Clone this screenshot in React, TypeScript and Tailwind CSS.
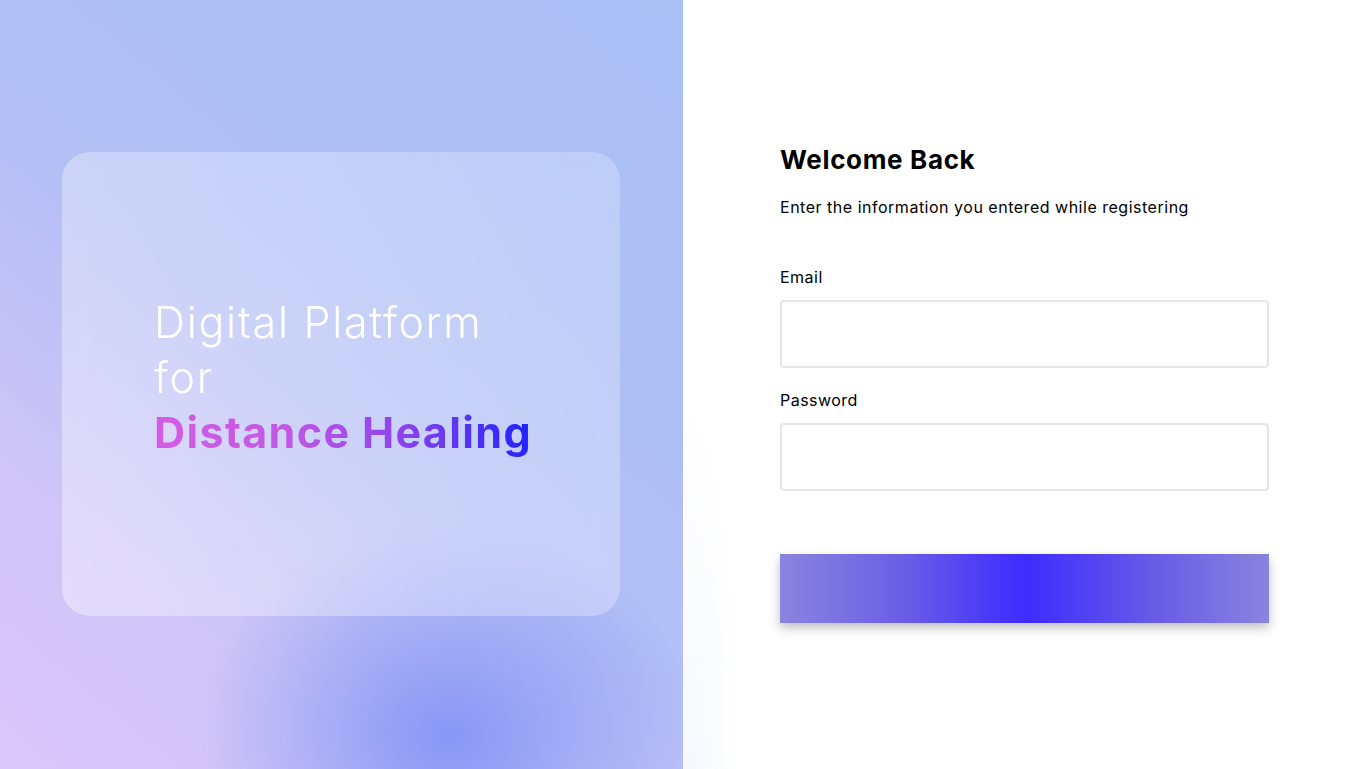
import React from "react";

const LeftPanel = () => (
  <div className="relative flex h-full w-[683px] shrink-0 items-start overflow-hidden bg-[radial-gradient(ellipse_250px_210px_at_450px_735px,#8797f5_0%,rgba(140,155,245,0.6)_45%,rgba(160,170,245,0)_100%),linear-gradient(40deg,#dbc7fa_0%,#cdc4f7_25%,#b4bff5_48%,#adbff5_70%,#aac0f5_100%)]">
    <div className="ml-[62px] mt-[152px] h-[464px] w-[558px] rounded-[28px] bg-[linear-gradient(60deg,rgba(255,255,255,0.38)_0%,rgba(255,255,255,0.3)_50%,rgba(255,255,255,0.22)_100%)] pl-[92px] pt-[143px] backdrop-blur-md">
      <h1 className="font-['Inter',sans-serif] text-[43px] font-light leading-[55px] tracking-[0.04em] text-white">
        Digital Platform
        <br />
        for
        <br />
        <span className="bg-[linear-gradient(90deg,#d45ce2_0%,#c258e4_35%,#8d44ec_65%,#1f22ff_100%)] bg-clip-text font-bold tracking-[0.032em] text-transparent">
          Distance Healing
        </span>
      </h1>
    </div>
  </div>
);

const Field = ({ label, type, top }: { label: string; type: string; top: string }) => (
  <div className={`flex flex-col ${top}`}>
    <label className="text-base leading-6 tracking-[0.03em] text-black">{label}</label>
    <input
      type={type}
      className="mt-[11px] h-[68px] w-[489px] rounded-[4px] border-2 border-[#e6e6e6] bg-white px-4 outline-none"
    />
  </div>
);

export default function App() {
  return (
    <div className="flex h-[769px] w-full overflow-hidden bg-white font-['Inter',sans-serif]">
      <LeftPanel />
      <div className="flex h-full flex-1 flex-col bg-[radial-gradient(ellipse_60px_380px_at_0%_100%,rgba(236,239,252,0.45)_0%,rgba(255,255,255,0)_100%)] pl-[97px] pt-[144px]">
        <h2 className="text-[26px] font-bold leading-8 tracking-[0.025em] text-black">Welcome Back</h2>
        <p className="mt-[19px] text-base leading-6 tracking-[0.032em] text-black">
          Enter the information you entered while registering
        </p>
        <Field label="Email" type="email" top="mt-[46px]" />
        <Field label="Password" type="password" top="mt-[20px]" />
        <button className="mt-[63px] h-[69px] w-[489px] bg-[linear-gradient(90deg,#8a84df_0%,#6a5ee6_25%,#3f2bff_50%,#6458e7_75%,#8a84df_100%)] shadow-[0_5px_10px_rgba(0,0,0,0.25)]" />
      </div>
    </div>
  );
}
